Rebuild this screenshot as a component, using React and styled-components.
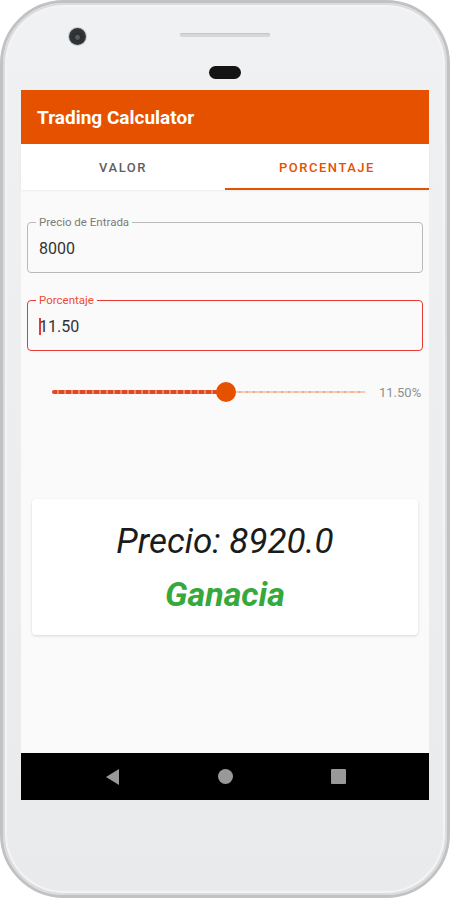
import React from 'react'
import styled, { createGlobalStyle } from 'styled-components'

const GlobalStyle = createGlobalStyle`
  html, body {
    margin: 0;
    background: #ffffff;
    font-family: Roboto, "Liberation Sans", Arial, sans-serif;
  }
`

const SLIDER_FRACTION = 0.556

const App = () => {
  return (
    <>
      <GlobalStyle />
      <Phone>
        <TopBezel>
          <Camera />
          <Speaker />
          <Sensor />
        </TopBezel>
        <Screen>
          <AppBar>
            <Title>Trading Calculator</Title>
          </AppBar>
          <Tabs>
            <Tab>VALOR</Tab>
            <Tab active>PORCENTAJE</Tab>
          </Tabs>
          <Content>
            <Field>
              <FloatLabel>Precio de Entrada</FloatLabel>
              <Value>8000</Value>
            </Field>
            <Field focused>
              <FloatLabel focused>Porcentaje</FloatLabel>
              <Caret />
              <Value>11.50</Value>
            </Field>
            <SliderRow>
              <Track>
                <InactiveTrack />
                <ActiveTrack style={{ width: `${SLIDER_FRACTION * 100}%` }} />
                <Thumb style={{ left: `${SLIDER_FRACTION * 100}%` }} />
              </Track>
              <SliderValue>11.50%</SliderValue>
            </SliderRow>
            <ResultCard>
              <Price>Precio: 8920.0</Price>
              <Result>Ganacia</Result>
            </ResultCard>
          </Content>
          <NavBar>
            <BackIcon viewBox="0 0 14 16">
              <polygon points="13,0 13,16 0,8" fill="#999999" />
            </BackIcon>
            <HomeIcon />
            <RecentIcon />
          </NavBar>
        </Screen>
      </Phone>
    </>
  )
}

// phone body
const Phone = styled.div`
  box-sizing: border-box;
  width: 450px;
  height: 898px;
  border: 3px solid #c2c2c5;
  border-radius: 64px;
  background: linear-gradient(#f0f1f2, #e9eaec);
  box-shadow: inset 0 0 0 2px #dcdcde, inset 0 0 0 4px #f4f4f5;
  display: flex;
  flex-direction: column;
  align-items: center;
  overflow: hidden;
`

const TopBezel = styled.div`
  position: relative;
  width: 100%;
  height: 87px;
  display: flex;
  flex-direction: column;
  align-items: center;
`

const Camera = styled.div`
  position: absolute;
  left: 66px;
  top: 25px;
  width: 17px;
  height: 17px;
  border-radius: 50%;
  background: radial-gradient(circle at 50% 55%, #55595c 0 2px, #2c2f31 3px, #3a3d40 100%);
  box-shadow: 0 0 0 1px #c9cacc;
`

const Speaker = styled.div`
  margin-top: 30px;
  width: 90px;
  height: 4px;
  border-radius: 2px;
  background: #d6d7d9;
  box-shadow: inset 0 1px 1px #c4c5c7;
`

const Sensor = styled.div`
  margin-top: 29px;
  width: 32px;
  height: 13px;
  border-radius: 7px;
  background: #141414;
`

const Screen = styled.div`
  width: 408px;
  height: 710px;
  background: #fafafa;
  display: flex;
  flex-direction: column;
`

// header
const AppBar = styled.div`
  height: 54px;
  flex: none;
  background: #e65100;
  display: flex;
  align-items: center;
  padding: 0 16px;
`

const Title = styled.h1`
  margin: 0;
  color: #ffffff;
  font-size: 19px;
  font-weight: 700;
`

const Tabs = styled.div`
  height: 46px;
  flex: none;
  display: flex;
  background: #ffffff;
  box-shadow: 0 1px 2px rgba(0, 0, 0, 0.06);
`

const Tab = styled.div`
  flex: 1;
  display: flex;
  align-items: center;
  justify-content: center;
  box-sizing: border-box;
  padding-top: 2px;
  font-size: 13px;
  font-weight: 500;
  letter-spacing: 1.5px;
  color: ${props => (props.active ? '#e65100' : '#5f5f5f')};
  border-bottom: 2px solid ${props => (props.active ? '#e65100' : 'transparent')};
`

// form
const Content = styled.div`
  flex: 1;
  display: flex;
  flex-direction: column;
  padding: 32px 6px 0;
`

const Field = styled.div`
  position: relative;
  box-sizing: border-box;
  height: 51px;
  margin-bottom: 27px;
  padding: 0 11px;
  display: flex;
  align-items: center;
  border: ${props => (props.focused ? '1.5px solid #e53935' : '1px solid #b9b9b9')};
  border-radius: 4px;
`

const FloatLabel = styled.span`
  position: absolute;
  left: 8px;
  top: -8px;
  padding: 0 3px;
  background: #fafafa;
  font-size: 11.5px;
  line-height: 14px;
  color: ${props => (props.focused ? '#ee4b30' : '#7a7a7a')};
`

const Value = styled.span`
  font-size: 16px;
  color: #333333;
  padding-top: 2px;
`

const Caret = styled.span`
  width: 1.5px;
  height: 17px;
  margin-right: -1.5px;
  margin-top: 2px;
  background: #e53935;
`

const SliderRow = styled.div`
  display: flex;
  align-items: center;
  height: 20px;
  margin-top: 4px;
  padding: 0 0 0 25px;
`

const Track = styled.div`
  position: relative;
  width: 313px;
  height: 20px;
  flex: none;
`

const InactiveTrack = styled.div`
  position: absolute;
  left: 0;
  right: 0;
  top: 9px;
  height: 2px;
  background: repeating-linear-gradient(to right, #f6c9b4 0 5px, #eaa98a 5px 7px);
`

const ActiveTrack = styled.div`
  position: absolute;
  left: 0;
  top: 8px;
  height: 4px;
  border-radius: 2px;
  background: repeating-linear-gradient(to right, #e2491e 0 5px, #ef8a6a 5px 7px);
`

const Thumb = styled.div`
  position: absolute;
  top: 0;
  width: 20px;
  height: 20px;
  margin-left: -10px;
  border-radius: 50%;
  background: #e65100;
`

const SliderValue = styled.span`
  margin-left: 14px;
  font-size: 13px;
  color: #8f8f8f;
`

const ResultCard = styled.div`
  margin: 97px 5px 0;
  height: 136px;
  box-sizing: border-box;
  padding-top: 2px;
  background: #ffffff;
  border-radius: 4px;
  box-shadow: 0 1px 3px rgba(0, 0, 0, 0.14);
  display: flex;
  flex-direction: column;
  align-items: center;
  justify-content: center;
  gap: 12px;
`

const Price = styled.div`
  font-size: 35px;
  font-style: italic;
  color: #1b1b1b;
  line-height: 40px;
`

const Result = styled.div`
  font-size: 34px;
  font-style: italic;
  font-weight: 700;
  color: #36a83c;
  line-height: 40px;
`

// android nav
const NavBar = styled.div`
  height: 47px;
  flex: none;
  background: #000000;
  display: flex;
  align-items: center;
  justify-content: center;
  gap: 98px;
  padding-left: 2px;
`

const BackIcon = styled.svg`
  width: 14px;
  height: 16px;
`

const HomeIcon = styled.div`
  width: 15px;
  height: 15px;
  border-radius: 50%;
  background: #999999;
`

const RecentIcon = styled.div`
  width: 15px;
  height: 15px;
  border-radius: 1px;
  background: #999999;
`

export default App
